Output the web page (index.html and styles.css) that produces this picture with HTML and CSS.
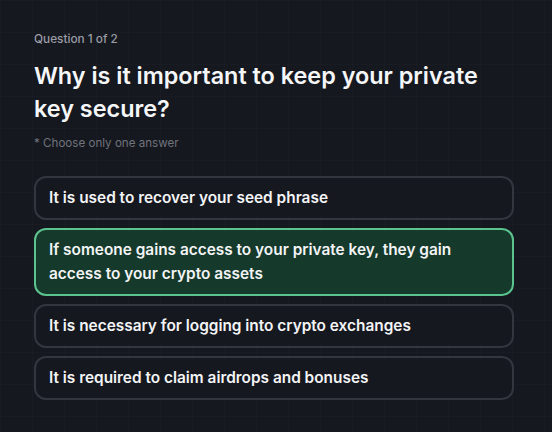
FILE: index.html
```html
<!DOCTYPE html>
<html lang="en">
<head>
<meta charset="utf-8">
<title>Quiz</title>
<link rel="stylesheet" href="styles.css">
</head>
<body>
<main class="quiz">
  <p class="progress">Question 1 of 2</p>
  <h1 class="question">Why is it important to keep your private key secure?</h1>
  <p class="hint">* Choose only one answer</p>
  <ul class="options">
    <li class="option">It is used to recover your seed phrase</li>
    <li class="option selected">If someone gains access to your private key, they gain access to your crypto assets</li>
    <li class="option">It is necessary for logging into crypto exchanges</li>
    <li class="option">It is required to claim airdrops and bonuses</li>
  </ul>
</main>
</body>
</html>
```
FILE: styles.css
```css
html, body {
  margin: 0;
  height: 100%;
}
body {
  background-color: #16181f;
  background-image:
    linear-gradient(rgba(255,255,255,0.012) 1px, transparent 1px),
    linear-gradient(90deg, rgba(255,255,255,0.012) 1px, transparent 1px);
  background-size: 32px 32px;
  font-family: Inter, "Noto Sans", sans-serif;
  color: #f3f4f6;
}
.quiz {
  padding: 31px 38px 0 34px;
  display: flex;
  flex-direction: column;
}
.progress {
  margin: 0;
  font-size: 11.8px;
  line-height: 16px;
  font-weight: 500;
  color: #9a9ca5;
}
.question {
  margin: 12px 0 0;
  font-size: 23.4px;
  line-height: 33px;
  font-weight: 600;
  color: #f5f6f8;
}
.hint {
  margin: 10px 0 0;
  font-size: 11.6px;
  line-height: 16px;
  font-weight: 400;
  color: #70737c;
}
.options {
  list-style: none;
  margin: 25px 0 0;
  padding: 0;
  display: flex;
  flex-direction: column;
  gap: 8px;
}
.option {
  border: 2px solid #33363f;
  border-radius: 12px;
  padding: 8px 13px;
  font-size: 15.4px;
  line-height: 24px;
  font-weight: 600;
  color: #f3f4f6;
  background: #16181f;
}
.option.selected {
  border-color: #5cc38f;
  background: #15392a;
}
```
